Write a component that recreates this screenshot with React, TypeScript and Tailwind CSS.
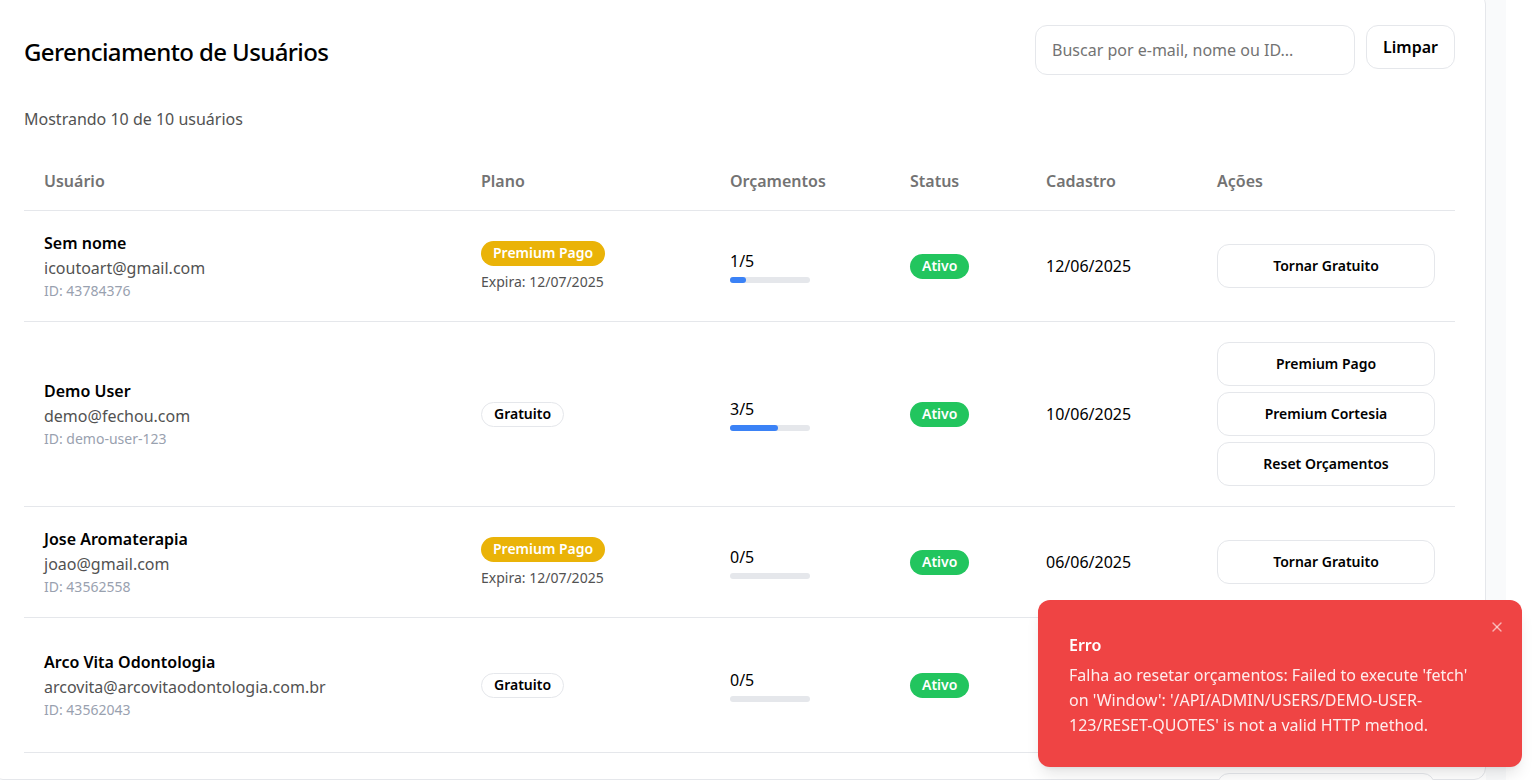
import { X } from "lucide-react"

type User = {
  name: string
  email: string
  id: string
  plan: "paid" | "free"
  expires?: string
  used: number
  created: string
}

const users: User[] = [
  { name: "Sem nome", email: "icoutoart@gmail.com", id: "43784376", plan: "paid", expires: "12/07/2025", used: 1, created: "12/06/2025" },
  { name: "Demo User", email: "demo@fechou.com", id: "demo-user-123", plan: "free", used: 3, created: "10/06/2025" },
  { name: "Jose Aromaterapia", email: "joao@gmail.com", id: "43562558", plan: "paid", expires: "12/07/2025", used: 0, created: "06/06/2025" },
  { name: "Arco Vita Odontologia", email: "arcovita@arcovitaodontologia.com.br", id: "43562043", plan: "free", used: 0, created: "05/06/2025" },
  { name: "Clínica Bem Estar", email: "contato@bemestar.com", id: "43561987", plan: "free", used: 0, created: "04/06/2025" },
]

const cols = "grid grid-cols-[437px_249px_180px_136px_171px_258px]"

function ActionButton({ label }: { label: string }) {
  return (
    <button className="w-[218px] h-11 rounded-xl border border-[#e5e7eb] bg-white text-sm font-semibold text-black">
      {label}
    </button>
  )
}

function Row({ u }: { u: User }) {
  const actions =
    u.plan === "paid"
      ? ["Tornar Gratuito"]
      : u.used > 0
        ? ["Premium Pago", "Premium Cortesia", "Reset Orçamentos"]
        : ["Premium Pago", "Premium Cortesia"]

  return (
    <div className={`${cols} items-center border-b border-[#e5e7eb]`}>
      <div className="px-5 py-5">
        <div className="font-semibold text-black leading-6">{u.name}</div>
        <div className="text-neutral-600 leading-[26px]">{u.email}</div>
        <div className="text-sm text-gray-400 leading-5">ID: {u.id}</div>
      </div>
      <div className="px-5">
        {u.plan === "paid" ? (
          <div className="flex flex-col items-start">
            <span className="rounded-full bg-[#eab308] px-3 h-[25px] flex items-center text-sm font-semibold text-white">Premium Pago</span>
            <span className="mt-1.5 text-sm text-neutral-600">Expira: {u.expires}</span>
          </div>
        ) : (
          <span className="inline-flex h-[25px] items-center rounded-full border border-[#e5e7eb] px-3 text-sm font-semibold text-black">Gratuito</span>
        )}
      </div>
      <div className="px-5">
        <div className="text-black leading-6">{u.used}/5</div>
        <div className="mt-1 h-1.5 w-20 rounded-full bg-[#e5e7eb]">
          <div className="h-1.5 rounded-full bg-[#3b82f6]" style={{ width: `${(u.used / 5) * 100}%` }} />
        </div>
      </div>
      <div className="px-5">
        <span className="inline-flex h-[25px] items-center rounded-full bg-[#22c55e] px-3 text-sm font-semibold text-white">Ativo</span>
      </div>
      <div className="px-5 text-black">{u.created}</div>
      <div className="px-5 py-5 flex flex-col gap-1.5">
        {actions.map((a) => (
          <ActionButton key={a} label={a} />
        ))}
      </div>
    </div>
  )
}

export default function App() {
  return (
    <div className="flex h-[780px] overflow-hidden bg-white" style={{ fontFamily: '"Noto Sans", sans-serif' }}>
      <div className="-ml-[9px] -mt-2 w-[1495px] shrink-0 rounded-xl border border-[#e5e7eb] bg-white py-8 pl-8 pr-[30px]">
        <div className="flex items-center justify-between">
          <h1 className="pt-1 text-2xl font-medium tracking-tight text-black">Gerenciamento de Usuários</h1>
          <div className="flex items-start gap-[11px]">
            <input
              className="h-[50px] w-[320px] rounded-xl border border-[#e5e7eb] px-4 text-base text-black placeholder:text-neutral-500 outline-none"
              placeholder="Buscar por e-mail, nome ou ID..."
            />
            <button className="h-11 rounded-xl border border-[#e5e7eb] px-4 font-semibold text-black">Limpar</button>
          </div>
        </div>
        <p className="mt-8 text-neutral-600 leading-6">Mostrando 10 de 10 usuários</p>
        <div className="mt-6">
          <div className={`${cols} border-b border-[#e5e7eb] font-semibold text-neutral-500`}>
            <div className="px-5 pt-[14px] pb-[17px]">Usuário</div>
            <div className="px-5 pt-[14px] pb-[17px]">Plano</div>
            <div className="px-5 pt-[14px] pb-[17px]">Orçamentos</div>
            <div className="px-5 pt-[14px] pb-[17px]">Status</div>
            <div className="px-5 pt-[14px] pb-[17px]">Cadastro</div>
            <div className="px-5 pt-[14px] pb-[17px]">Ações</div>
          </div>
          {users.map((u) => (
            <Row key={u.id} u={u} />
          ))}
        </div>
      </div>
      <div className="w-5 shrink-0 bg-gray-50" />

      <div className="fixed bottom-[13px] right-[13px] w-[484px] rounded-xl bg-[#ef4444] pt-[33px] pb-[29px] pl-[31px] pr-8 text-white shadow-lg">
        <button className="absolute right-[17px] top-[19px] text-white/60">
          <X size={16} />
        </button>
        <div className="font-semibold leading-6">Erro</div>
        <div className="mt-1.5 leading-[25px] text-white/90">
          Falha ao resetar orçamentos: Failed to execute 'fetch' on 'Window': '/API/ADMIN/USERS/DEMO-USER-123/RESET-QUOTES' is not a valid HTTP method.
        </div>
      </div>
    </div>
  )
}
